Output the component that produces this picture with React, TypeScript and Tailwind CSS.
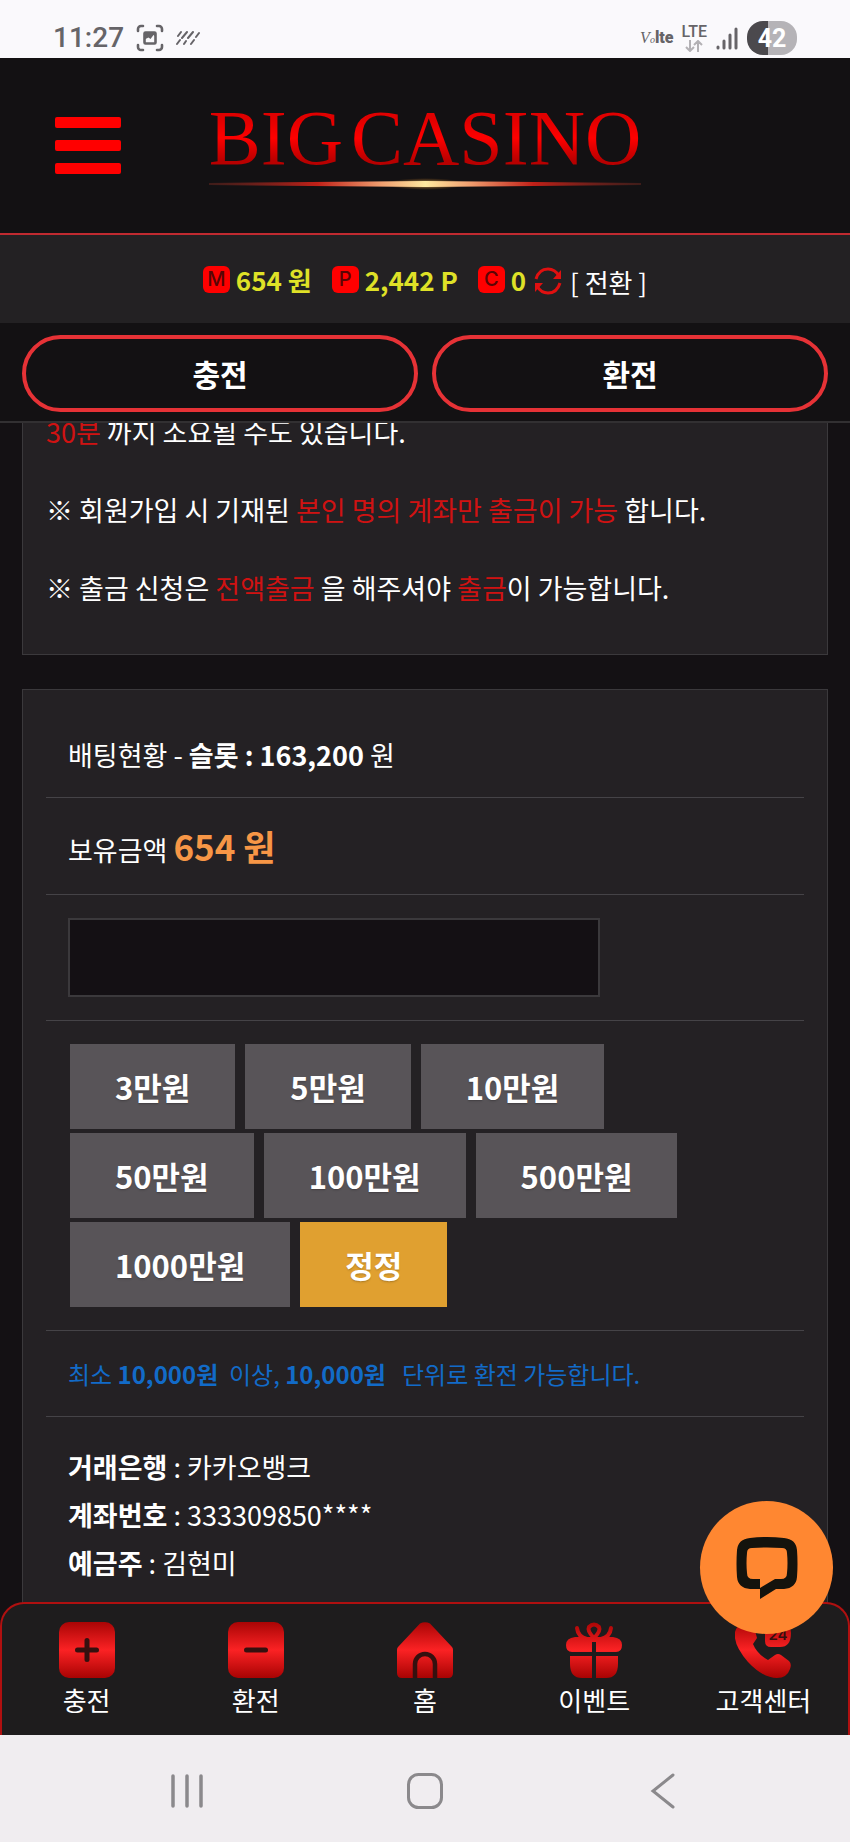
import { useState } from 'react';
import type { ReactNode } from 'react';
import clsx from 'clsx';

const AMOUNTS = [
  { label: '3만원', value: 30000 },
  { label: '5만원', value: 50000 },
  { label: '10만원', value: 100000 },
  { label: '50만원', value: 500000 },
  { label: '100만원', value: 1000000 },
  { label: '500만원', value: 5000000 },
  { label: '1000만원', value: 10000000 },
];

const ACCOUNT = [
  { label: '거래은행', value: '카카오뱅크' },
  { label: '계좌번호', value: '333309850****' },
  { label: '예금주', value: '김현미' },
];

function StatusBar() {
  return (
    <div className="flex h-[58px] shrink-0 items-end justify-between bg-[#faf9fc] px-[53px] font-['Roboto','Liberation_Sans',sans-serif] text-[#666468]">
      <div className="flex h-10 items-center">
        <span className="text-[28px] leading-none font-medium">11:27</span>
        <svg className="ml-3 h-7 w-7" viewBox="0 0 28 28" fill="none" stroke="currentColor" strokeWidth="2.6" strokeLinecap="round">
          <path d="M2 7V5a3 3 0 0 1 3-3h2M21 2h2a3 3 0 0 1 3 3v2M26 21v2a3 3 0 0 1-3 3h-2M7 26H5a3 3 0 0 1-3-3v-2" />
          <rect x="8.500" y="8.500" width="11" height="11" rx="1" />
          <path d="M8.500 8.500h11v4l-2-1.500-3 4-2-1.500-4 2z" fill="currentColor" stroke="none" />
        </svg>
        <svg className="ml-3 h-4 w-6" viewBox="0 0 24 16" stroke="currentColor" strokeWidth="2" strokeLinecap="round">
          <path d="M2 6l3-4M1 14l3-4M6 8l5-6M8 14l2-3M12 8l5-6M15 14l3-4M20 7l3-4" />
        </svg>
      </div>
      <div className="flex h-10 items-center">
        <span className="flex items-baseline leading-none">
          <span className="font-['Liberation_Serif',serif] text-base italic">V</span>
          <span className="font-['Liberation_Serif',serif] text-[10px] italic">o</span>
          <span className="text-base font-black">lte</span>
        </span>
        <span className="ml-2 flex flex-col items-center">
          <span className="text-base leading-4 font-medium">LTE</span>
          <svg className="h-3 w-5" viewBox="0 0 20 12" fill="none" stroke="#b3b1b5" strokeWidth="2">
            <path d="M6 0v11M2 7l4 4 4-4M14 12V1M10 5l4-4 4 4" />
          </svg>
        </span>
        <svg className="ml-2 h-6 w-6" viewBox="0 0 24 24" stroke="currentColor" strokeWidth="3" strokeLinecap="round">
          <path d="M3 21v1M9 15v7M15 9v13M21 3v19" />
        </svg>
        <span className="ml-2 flex h-[34px] w-[50px] items-center justify-center rounded-2xl bg-linear-to-r from-[#4b494d] from-42% to-[#b5b3b7] to-42% text-[25px] leading-none font-bold text-white">
          42
        </span>
      </div>
    </div>
  );
}

function Logo() {
  return (
    <a href="#" className="block">
      <span className="flex gap-2 bg-linear-to-b from-[#e00000] from-25% via-[#ff0000] via-50% to-[#b80000] to-80% bg-clip-text font-['Liberation_Serif',serif] text-[78px] leading-[76px] whitespace-nowrap text-transparent">
        <span>BIG</span>
        <span>CASINO</span>
      </span>
      <svg className="h-4 w-full" viewBox="0 0 430 16" preserveAspectRatio="none">
        <defs>
          <linearGradient id="beam">
            <stop offset="0" stopColor="#6a2820" stopOpacity="0.500" />
            <stop offset="0.250" stopColor="#c02018" />
            <stop offset="0.400" stopColor="#f0a070" />
            <stop offset="0.500" stopColor="#ffe9a0" />
            <stop offset="0.600" stopColor="#f0a070" />
            <stop offset="0.750" stopColor="#c02018" />
            <stop offset="1" stopColor="#6a2820" stopOpacity="0.500" />
          </linearGradient>
          <radialGradient id="glow">
            <stop offset="0" stopColor="#ffe08a" />
            <stop offset="1" stopColor="#a05a10" stopOpacity="0" />
          </radialGradient>
        </defs>
        <ellipse cx="215" cy="8" rx="40" ry="6" fill="url(#glow)" />
        <path d="M0 7L215 5L430 7V9L215 11L0 9z" fill="url(#beam)" />
      </svg>
    </a>
  );
}

function Balance({ mark, children }: { mark: string; children: ReactNode }) {
  return (
    <span className="flex items-center gap-[6px]">
      <span className="flex h-[27px] w-[27px] items-center justify-center rounded-md bg-[#ff0000] font-['Inter',sans-serif] text-xl leading-none font-medium text-[#5a0505]">
        {mark}
      </span>
      <span className="font-bold text-[#dfe127]">{children}</span>
    </span>
  );
}

function Row({ children, last }: { children: ReactNode; last?: boolean }) {
  return (
    <div className={clsx('px-[22px]', last ? 'py-[26px]' : 'border-b border-[#454347] py-[23px]')}>
      {children}
    </div>
  );
}

function Red({ children }: { children: ReactNode }) {
  return <span className="text-[#d01212]">{children}</span>;
}

function TabIcon({ name }: { name: string }) {
  return (
    <svg className="h-14 w-14" viewBox="0 0 56 56">
      <defs>
        <linearGradient id={`red-${name}`} x1="0" y1="0" x2="0" y2="56" gradientUnits="userSpaceOnUse">
          <stop offset="0" stopColor="#a90505" />
          <stop offset="0.500" stopColor="#fb2224" />
          <stop offset="1" stopColor="#a80303" />
        </linearGradient>
      </defs>
      {(name === 'plus' || name === 'minus') && (
        <>
          <rect width="56" height="56" rx="10" fill={`url(#red-${name})`} />
          <path d={name === 'plus' ? 'M18.500 28h19M28 18.500v19' : 'M18.500 28h19'} stroke="#35100f" strokeWidth="5" strokeLinecap="round" />
        </>
      )}
      {name === 'home' && (
        <>
          <path d="M23 1.500Q28-1 33 1.500L55 25q1 1 1 3v23q0 5-5 5H5q-5 0-5-5V28q0-2 1-3z" fill="url(#red-home)" />
          <path d="M18 56V42a10 10 0 0 1 20 0v14" fill="none" stroke="#35100f" strokeWidth="4.500" />
        </>
      )}
      {name === 'gift' && (
        <>
          <g fill="none" stroke="url(#red-gift)" strokeWidth="4">
            <path d="M11 6q1 9 10 11M45 6q-1 9-10 11" strokeLinecap="round" />
            <path d="M28 16q-7-7-5-11 5-5 10 0 2 4-5 11z" />
          </g>
          <path d="M9 15h38q9 1 9 8t-6 7H6q-6 0-6-7t9-8zM4 34h48v8q0 14-12 14H16Q4 56 4 42z" fill="url(#red-gift)" />
          <path d="M28 20v36M4 32h48" stroke="#1e1c1d" strokeWidth="4" />
        </>
      )}
      {name === 'call' && (
        <>
          <path d="M8 2l10-1 4 15-4 6q4 10 15 16l7-5q3-2 6 0l8 6q3 3 1 8-3 9-13 9-14 0-29-16Q-2 23 0 10 1 4 8 2z" fill="url(#red-call)" />
          <path d="M32 4h18q6 0 6 7 0 14-11 14h-9q-6 0-6-6V6z" fill="url(#red-call)" />
          <text x="43" y="18" textAnchor="middle" fontSize="15" fontWeight="600" fill="#35100f" fontFamily="Inter, sans-serif">24</text>
        </>
      )}
    </svg>
  );
}

const TABS = [
  { label: '충전', icon: 'plus' },
  { label: '환전', icon: 'minus' },
  { label: '홈', icon: 'home' },
  { label: '이벤트', icon: 'gift' },
  { label: '고객센터', icon: 'call' },
];

export default function App() {
  const [amount, setAmount] = useState(0);

  return (
    <div className="relative flex h-screen flex-col overflow-hidden bg-[#141114] font-['Noto_Sans_CJK_KR',sans-serif] text-[26px] leading-[39px] text-white">
      <StatusBar />

      <header className="grid h-[177px] shrink-0 grid-cols-[1fr_auto_1fr] items-center border-b-2 border-[#c02a30] bg-[#131113]">
        <button type="button" aria-label="메뉴" className="ml-[55px] flex w-[66px] flex-col gap-3">
          <span className="h-[11px] rounded-xs bg-[#ff0000]" />
          <span className="h-[11px] rounded-xs bg-[#ff0000]" />
          <span className="h-[11px] rounded-xs bg-[#ff0000]" />
        </button>
        <Logo />
      </header>

      <div className="flex h-[88px] shrink-0 items-center justify-center gap-5 bg-[#232123]">
        <Balance mark="M">654 원</Balance>
        <Balance mark="P">2,442 P</Balance>
        <div className="flex items-center gap-2">
          <Balance mark="C">0</Balance>
          <button type="button" className="flex items-center gap-2 pt-1">
            <svg className="h-7 w-7" viewBox="0 0 28 28" fill="none" stroke="#e01010" strokeWidth="3">
              <path d="M2 12Q5 2 14 2q7 0 11 7M26 16q-3 10-12 10-7 0-11-7" />
              <path d="M27 3v9h-8zM1 25v-9h8z" fill="#e01010" stroke="none" />
            </svg>
            [ 전환 ]
          </button>
        </div>
      </div>

      <div className="grid shrink-0 grid-cols-2 gap-[14px] border-b-2 border-[#323032] bg-[#131113] px-[22px] pt-3 pb-[9px] text-[30px] font-bold">
        <button type="button" className="h-[77px] rounded-full border-4 border-[#e63236]">충전</button>
        <button type="button" className="h-[77px] rounded-full border-4 border-[#e63236]">환전</button>
      </div>

      <main className="flex min-h-0 flex-1 flex-col overflow-hidden px-[22px] text-[27px]">
        <section className="-mt-3 shrink-0 space-y-[39px] border border-[#3b393c] bg-[#242124] px-[23px] pb-[47px]">
          <p><Red>30분</Red> 까지 소요될 수도 있습니다.</p>
          <p>※ 회원가입 시 기재된 <Red>본인 명의 계좌만 출금이 가능</Red> 합니다.</p>
          <p>※ 출금 신청은 <Red>전액출금</Red> 을 해주셔야 <Red>출금</Red>이 가능합니다.</p>
        </section>

        <section className="mt-[34px] shrink-0 border border-[#3b393c] bg-[#242124] px-[23px] pt-[22px] pb-10">
          <Row>배팅현황 - <b>슬롯 : 163,200</b> 원</Row>
          <Row>
            보유금액 <b className="text-[35px] leading-[50px] text-[#f79646]">654 원</b>
          </Row>
          <Row>
            <input
              type="text"
              inputMode="numeric"
              aria-label="환전 금액"
              value={amount ? amount.toLocaleString() : ''}
              onChange={(e) => setAmount(Number(e.target.value.replace(/\D/g, '')))}
              className="block h-[79px] w-[532px] max-w-full border-2 border-[#3b393c] bg-[#141014] px-4 outline-none"
            />
          </Row>
          <Row>
            <div className="flex flex-wrap gap-x-[10px] gap-y-1 px-[2px] text-[31px] font-bold">
              {AMOUNTS.map((item) => (
                <button
                  key={item.value}
                  type="button"
                  onClick={() => setAmount((prev) => prev + item.value)}
                  className="h-[85px] bg-[#585458] px-[45px] text-shadow-sm"
                >
                  {item.label}
                </button>
              ))}
              <button type="button" onClick={() => setAmount(0)} className="h-[85px] bg-[#e0a030] px-[45px] text-shadow-sm">
                정정
              </button>
            </div>
          </Row>
          <Row>
            <p className="text-2xl leading-[39px] text-[#126bc8]">
              최소 <b>10,000원</b>&nbsp; 이상, <b>10,000원</b>&nbsp;&nbsp; 단위로 환전 가능합니다.
            </p>
          </Row>
          <Row last>
            {ACCOUNT.map((item) => (
              <p key={item.label} className="leading-[48px]">
                <b>{item.label}</b> : {item.value}
              </p>
            ))}
          </Row>
        </section>
      </main>

      <nav className="relative -mt-6 grid shrink-0 grid-cols-5 rounded-t-3xl border-2 border-b-0 border-[#b01010] bg-[#1e1c1d] pt-[18px] pb-4">
        {TABS.map((tab) => (
          <a key={tab.icon} href="#" className="flex flex-col items-center gap-[2px]">
            <TabIcon name={tab.icon} />
            {tab.label}
          </a>
        ))}
      </nav>

      <div className="grid h-[107px] shrink-0 grid-cols-3 items-center bg-[#f0edf0] px-17 pt-1 text-[#8b898c]">
        <button type="button" aria-label="최근 앱" className="flex justify-center">
          <svg className="h-9 w-9" viewBox="0 0 36 36" stroke="currentColor" strokeWidth="3.500" strokeLinecap="round">
            <path d="M4 3v30M18 3v30M32 3v30" />
          </svg>
        </button>
        <button type="button" aria-label="홈 화면" className="flex justify-center">
          <svg className="h-9 w-9" viewBox="0 0 36 36" fill="none" stroke="currentColor" strokeWidth="3">
            <rect x="1.500" y="1.500" width="33" height="33" rx="10" />
          </svg>
        </button>
        <button type="button" aria-label="뒤로" className="flex justify-center">
          <svg className="h-9 w-9" viewBox="0 0 36 36" fill="none" stroke="currentColor" strokeWidth="3" strokeLinecap="round">
            <path d="M28 2L8 18l20 16" />
          </svg>
        </button>
      </div>

      <button
        type="button"
        aria-label="채팅 상담"
        className="absolute right-[17px] bottom-[208px] flex h-[133px] w-[133px] items-center justify-center rounded-full bg-[#ff8731]"
      >
        <svg className="h-16 w-16" viewBox="0 0 64 64" fill="#14130d">
          <path
            fillRule="evenodd"
            d="M15 2Q32 0 49 2q12 1 13 12 1 14 0 27-1 11-13 12h-8L25 63V53H15Q3 52 2 41 1 28 2 14 3 3 15 2zM17 12q-5 0-5 5-1 10 0 20 0 6 6 6h7v9l15-9h6q6 0 6-6 1-10 0-20 0-5-5-5-15-1-30 0z"
          />
        </svg>
      </button>
    </div>
  );
}
